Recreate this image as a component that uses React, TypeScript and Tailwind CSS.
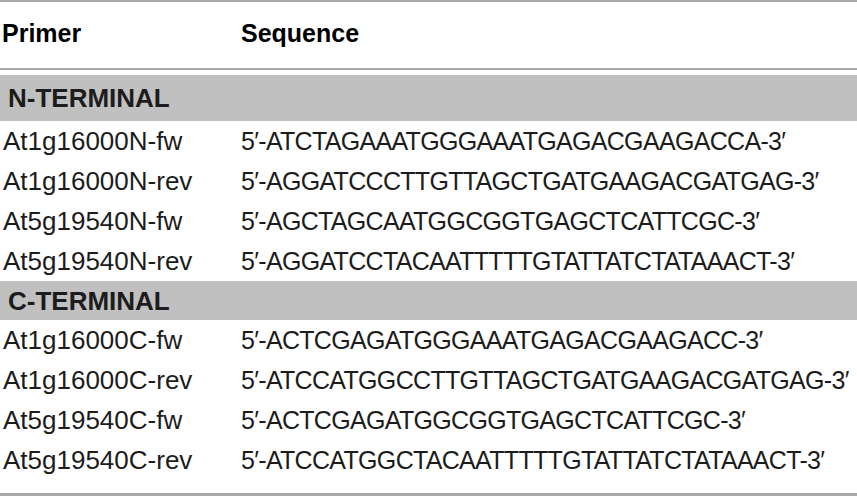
import type { JSX } from 'react'

interface Primer {
  name: string
  seq: string
}

interface Group {
  label: string
  rows: Primer[]
}

const groups: Group[] = [
  {
    label: 'N-TERMINAL',
    rows: [
      { name: 'At1g16000N-fw', seq: 'ATCTAGAAATGGGAAATGAGACGAAGACCA' },
      { name: 'At1g16000N-rev', seq: 'AGGATCCCTTGTTAGCTGATGAAGACGATGAG' },
      { name: 'At5g19540N-fw', seq: 'AGCTAGCAATGGCGGTGAGCTCATTCGC' },
      { name: 'At5g19540N-rev', seq: 'AGGATCCTACAATTTTTGTATTATCTATAAACT' },
    ],
  },
  {
    label: 'C-TERMINAL',
    rows: [
      { name: 'At1g16000C-fw', seq: 'ACTCGAGATGGGAAATGAGACGAAGACC' },
      { name: 'At1g16000C-rev', seq: 'ATCCATGGCCTTGTTAGCTGATGAAGACGATGAG' },
      { name: 'At5g19540C-fw', seq: 'ACTCGAGATGGCGGTGAGCTCATTCGC' },
      { name: 'At5g19540C-rev', seq: 'ATCCATGGCTACAATTTTTGTATTATCTATAAACT' },
    ],
  },
]

function PrimerRow({ row }: { row: Primer }): JSX.Element {
  return (
    <div className="grid h-[40px] grid-cols-[241px_1fr] items-center leading-none">
      <span className="pl-[3px] text-[26px]">{row.name}</span>
      <span className="whitespace-nowrap text-[25px] tracking-[-0.68px]">
        5′-{row.seq}-3′
      </span>
    </div>
  )
}

function GroupBlock({ group, band }: { group: Group; band: string }): JSX.Element {
  return (
    <div>
      <div className={`flex items-center bg-[#c0c0c0] pl-[8px] text-[26px] font-bold leading-none ${band}`}>
        {group.label}
      </div>
      {group.rows.map(r => (
        <PrimerRow key={r.name} row={r} />
      ))}
    </div>
  )
}

export default function App(): JSX.Element {
  return (
    <div className="h-[496px] w-[857px] overflow-hidden bg-white font-['Liberation_Sans','Helvetica',Arial,sans-serif] text-[#1c1c1c]">
      <div className="border-t-2 border-b-2 border-[#a8a8a8]">
        <div className="grid h-[66px] grid-cols-[241px_1fr] items-center pb-[4px] text-[25px] font-bold leading-none text-black">
          <span className="pl-[2px]">Primer</span>
          <span>Sequence</span>
        </div>
      </div>
      <div className="border-b-[3px] border-[#a8a8a8] pt-[5px] pb-[13px]">
        <GroupBlock group={groups[0]} band="h-[46px]" />
        <GroupBlock group={groups[1]} band="h-[39px]" />
      </div>
    </div>
  )
}
